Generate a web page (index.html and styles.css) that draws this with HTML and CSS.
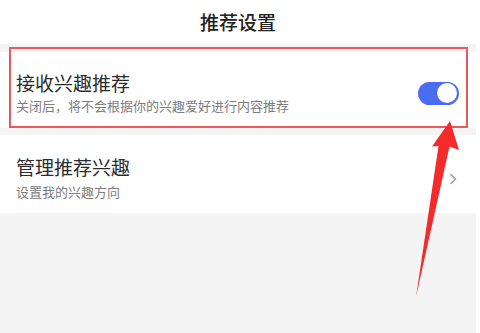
FILE: index.html
```html
<!DOCTYPE html>
<html lang="zh-CN">
<head>
    <meta charset="UTF-8">
    <meta name="viewport" content="width=device-width, initial-scale=1.0">
    <title>推荐设置</title>
    <link rel="stylesheet" href="styles.css">
</head>
<body>
    <div class="screen">
        <div class="header">推荐设置</div>

        <div class="group">
            <div class="row">
                <div class="row-text">
                    <div class="row-title">接收兴趣推荐</div>
                    <div class="row-sub">关闭后，将不会根据你的兴趣爱好进行内容推荐</div>
                </div>
                <div class="switch on"><span class="knob"></span></div>
            </div>
        </div>

        <div class="group">
            <div class="row row-link">
                <div class="row-text">
                    <div class="row-title">管理推荐兴趣</div>
                    <div class="row-sub">设置我的兴趣方向</div>
                </div>
                <svg class="chevron" width="8" height="12" viewBox="0 0 8 12">
                    <path d="M1.5 1 L6.5 6 L1.5 11" fill="none" stroke="#9a9a9a" stroke-width="1.4"/>
                </svg>
            </div>
        </div>

        <!-- annotation overlay -->
        <div class="highlight"></div>
        <svg class="arrow" width="476" height="333" viewBox="0 0 476 333">
            <polygon points="450,121 459,150 449.5,146.5 416,297 438.5,146 432,146.5" fill="#f52a2a"/>
        </svg>
    </div>
</body>
</html>
```

FILE: styles.css
```css
body {
    margin: 0;
    background-color: #ffffff;
    font-family: "Noto Sans CJK SC", "Noto Sans", sans-serif;
}
.screen {
    position: relative;
    width: 476px;
    height: 333px;
    background-color: #f4f4f4;
    overflow: hidden;
}
.header {
    height: 44px;
    line-height: 44px;
    text-align: center;
    font-size: 19px;
    font-weight: 500;
    color: #222222;
    background-color: #ffffff;
    margin-bottom: 8px;
}
.group {
    background-color: #ffffff;
    margin-bottom: 7px;
}
.row {
    display: flex;
    align-items: center;
    justify-content: space-between;
    padding: 19px 17px 15px 16px;
}
.row-link {
    padding: 20px 19px 14px 16px;
}
.row-title {
    font-size: 19px;
    line-height: 23px;
    color: #2b2b2b;
}
.row-sub {
    margin-top: 4px;
    font-size: 13px;
    line-height: 15px;
    color: #7d7d7d;
}
.row-link .row-sub {
    margin-top: 6px;
}
.switch {
    width: 41px;
    height: 23px;
    border-radius: 12px;
    background-color: #4a6cf0;
    position: relative;
    margin-top: 2px;
}
.switch .knob {
    position: absolute;
    right: 2px;
    top: 1.5px;
    width: 20px;
    height: 20px;
    border-radius: 50%;
    background-color: #ffffff;
}
.chevron {
    margin-top: 4px;
}
.highlight {
    position: absolute;
    left: 9px;
    top: 47px;
    width: 455px;
    height: 77px;
    border: 2px solid #ea5a5c;
}
.arrow {
    position: absolute;
    left: 0;
    top: 0;
}
```
